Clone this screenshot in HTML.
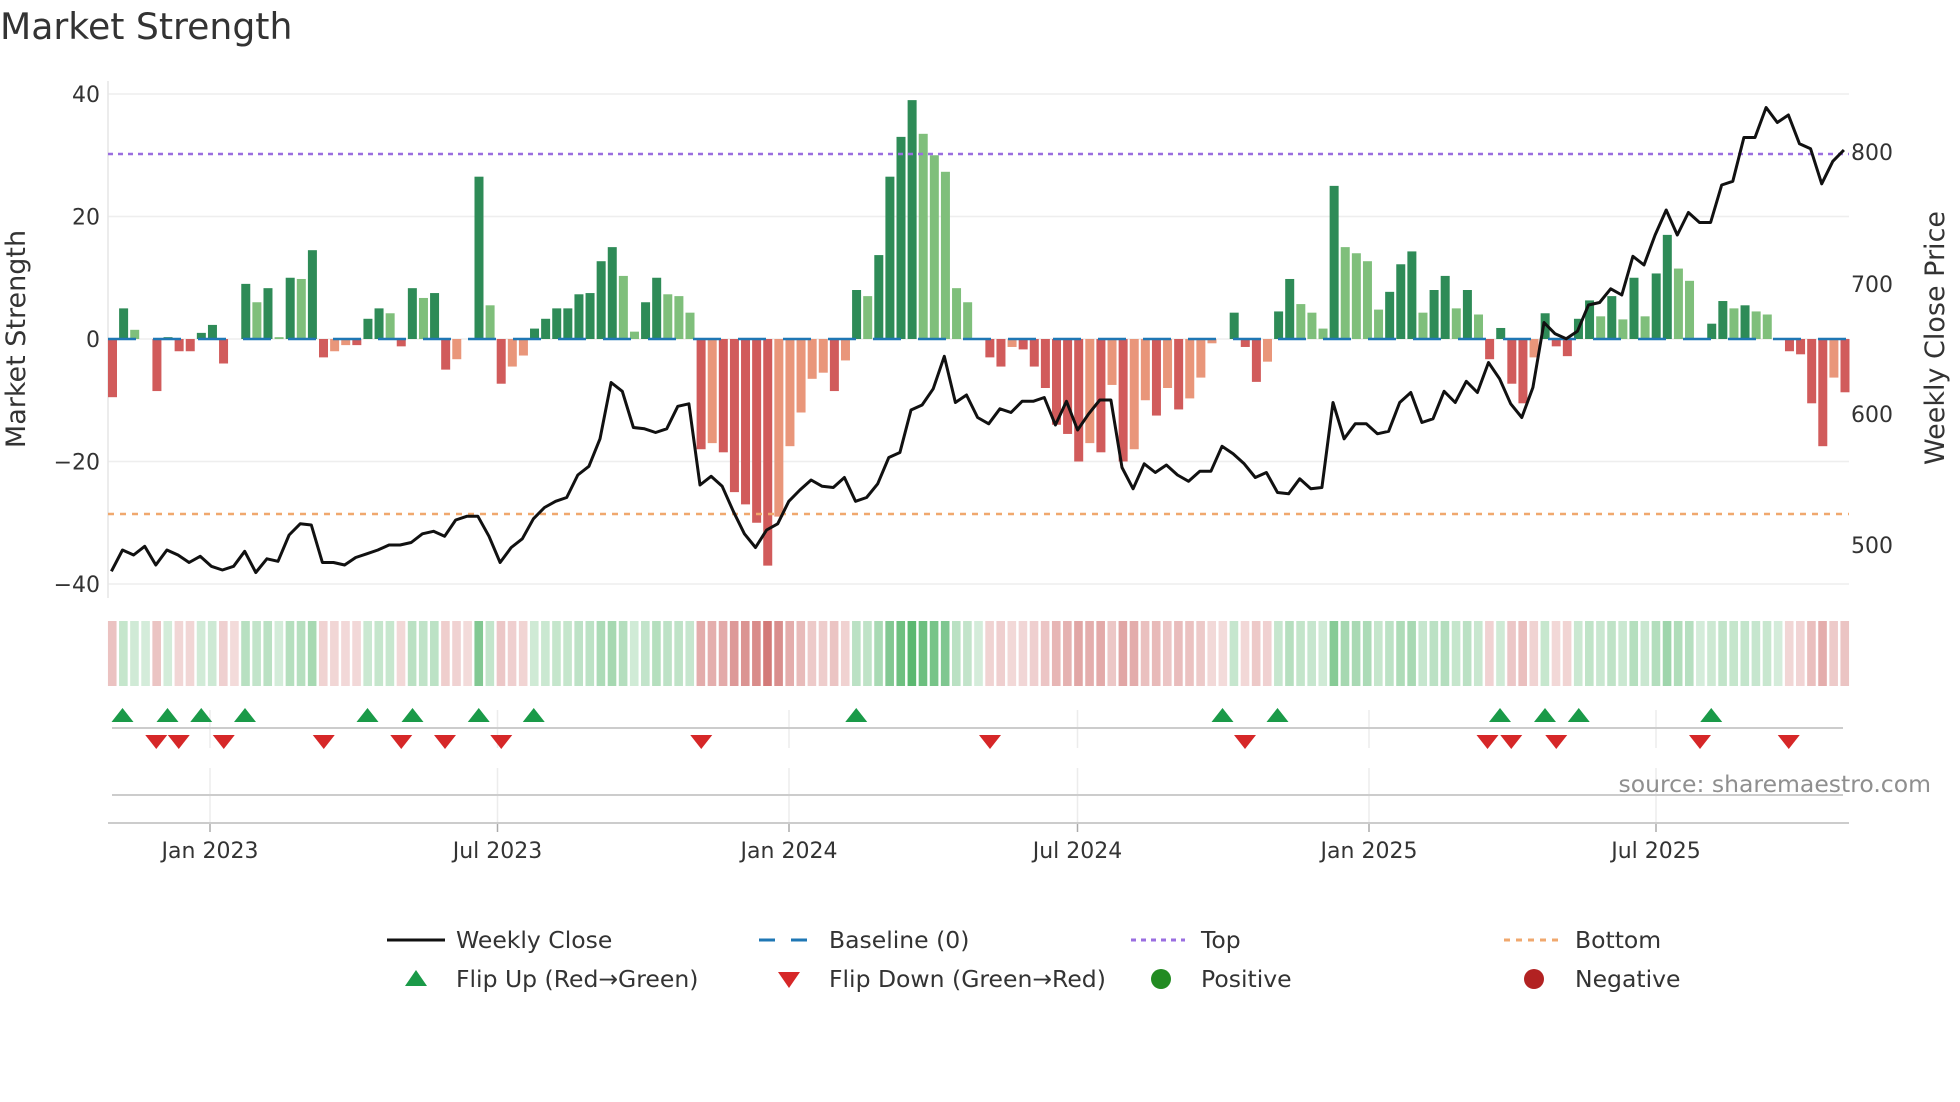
<!DOCTYPE html>
<html><head><meta charset="utf-8"><style>
html,body{margin:0;padding:0;background:#fff;}
svg{display:block;font-family:"DejaVu Sans","Liberation Sans",sans-serif;}
</style></head><body>
<svg id="s" width="1960" height="1102" viewBox="0 0 1960 1102" xmlns="http://www.w3.org/2000/svg">
<text x="0" y="39" font-size="36.2" fill="#333">Market Strength</text>
<g id="grid"></g>
<g id="bars"></g>
<g id="heat"></g>
<g id="lines"></g>
<g id="marks"></g>
<g id="labels" font-size="22" fill="#333"></g>
<text x="1931" y="792" font-size="23.5" fill="#8f8f8f" text-anchor="end">source: sharemaestro.com</text>
<g font-size="23.5" fill="#333">
<line x1="387" y1="940" x2="445" y2="940" stroke="#111" stroke-width="3"/>
<text x="456" y="948">Weekly Close</text>
<line x1="759" y1="940" x2="812" y2="940" stroke="#1f77b4" stroke-width="3" stroke-dasharray="16,16"/>
<text x="829" y="948">Baseline (0)</text>
<line x1="1131" y1="940" x2="1185" y2="940" stroke="#9a6ee0" stroke-width="3" stroke-dasharray="5,5"/>
<text x="1201" y="948">Top</text>
<line x1="1504" y1="940" x2="1560" y2="940" stroke="#f0a86e" stroke-width="3" stroke-dasharray="6,6"/>
<text x="1575" y="948">Bottom</text>
<polygon points="405,986 427,986 416,970" fill="#1a9a48"/>
<text x="456" y="987">Flip Up (Red→Green)</text>
<polygon points="778,972 800,972 789,988" fill="#d62728"/>
<text x="829" y="987">Flip Down (Green→Red)</text>
<circle cx="1161" cy="979" r="10" fill="#228b22"/>
<text x="1201" y="987">Positive</text>
<circle cx="1534" cy="979" r="10" fill="#b22222"/>
<text x="1575" y="987">Negative</text>
</g>
</svg>
<script>
var NS="http://www.w3.org/2000/svg";
function el(p,t,a,txt){var e=document.createElementNS(NS,t);for(var k in a)e.setAttribute(k,a[k]);if(txt!==undefined)e.textContent=txt;document.getElementById(p).appendChild(e);return e;}
var V=[-9.5,5,1.5,0,-8.5,0.3,-2,-2,1,2.3,-4,0,9,6,8.3,0.3,10,9.8,14.5,-3,-2,-1,-1,3.3,5,4.2,-1.2,8.3,6.7,7.5,-5,-3.3,0,26.5,5.5,-7.3,-4.5,-2.7,1.7,3.3,5,5,7.3,7.5,12.7,15,10.3,1.2,6,10,7.3,7,4.3,-18,-17,-18.5,-25,-27,-30,-37,-29,-17.5,-12,-6.5,-5.5,-8.5,-3.5,8,7,13.7,26.5,33,39,33.5,30,27.3,8.3,6,0,-3,-4.5,-1.3,-1.7,-4.5,-8,-14,-15.5,-20,-17,-18.5,-7.5,-20,-18,-10,-12.5,-8,-11.5,-9.7,-6.3,-0.7,0,4.3,-1.3,-7,-3.7,4.5,9.8,5.7,4.3,1.7,25,15,14,12.7,4.8,7.7,12.2,14.3,4.3,8,10.3,5,8,4,-3.3,1.8,-7.3,-10.5,-3,4.2,-1.2,-2.8,3.3,6.3,3.7,7,3.2,10,3.7,10.7,17,11.5,9.5,0,2.5,6.2,5,5.5,4.5,4,0,-2,-2.5,-10.5,-17.5,-6.3,-8.7];
var P=[457,440,444,437,452,440,444,450,445,453,456,453,441,458,447,449,428,419,420,450,450,452,446,443,440,436,436,434,427,425,429,416,413,413,429,450,438,431,415,406,401,398,380,373,351,306,313,342,343,346,343,325,323,388,381,389,409,427,438,424,419,401,392,384,389,390,382,401,398,387,366,362,328,324,311,285,322,316,334,339,327,330,321,321,318,340,321,344,331,320,320,374,391,371,378,372,380,385,377,377,357,363,371,382,378,394,395,383,391,390,322,351,339,339,347,345,322,314,338,335,313,322,305,314,290,303,323,334,310,258,267,271,265,244,242,231,236,205,212,188,168,188,170,178,178,148,145,110,110,86,98,92,115,119,147,129,120];
var X0=112.5,ST=(1845-112.5)/156,Z=339,U=122.5/20;
function X(i){return X0+ST*i;}
function Y(v){return Z-v*U;}
[40,20,0,-20,-40].forEach(function(v){el("grid","line",{x1:108,x2:1849,y1:Y(v),y2:Y(v),stroke:"#eeeeee","stroke-width":1.5});
 el("labels","text",{x:100,y:Y(v)+8,"text-anchor":"end"},(v<0?"\u2212"+(-v):""+v));});
el("grid","line",{x1:108,x2:108,y1:81,y2:598,stroke:"#e6e6e6","stroke-width":1.5});
var dates=[[210,"Jan 2023"],[497.5,"Jul 2023"],[789,"Jan 2024"],[1077.5,"Jul 2024"],[1369,"Jan 2025"],[1656,"Jul 2025"]];
dates.forEach(function(d){
 el("grid","line",{x1:d[0],x2:d[0],y1:710,y2:748,stroke:"#ececec","stroke-width":1.5});
 el("grid","line",{x1:d[0],x2:d[0],y1:768,y2:823,stroke:"#ececec","stroke-width":1.5});
 el("grid","line",{x1:d[0],x2:d[0],y1:823,y2:832,stroke:"#aaa","stroke-width":1.5});
 el("labels","text",{x:d[0],y:858,"text-anchor":"middle"},d[1]);});
el("grid","line",{x1:112,x2:1843,y1:728,y2:728,stroke:"#cccccc","stroke-width":2});
el("grid","line",{x1:112,x2:1843,y1:795,y2:795,stroke:"#cccccc","stroke-width":2});
el("grid","line",{x1:108,x2:1849,y1:823,y2:823,stroke:"#cccccc","stroke-width":2});
var bw=9;
V.forEach(function(v,i){
 if(v===0)return;
 var prev=i>0?V[i-1]:0,c;
 if(v>0)c=(prev>0&&v<prev)?"#7fbf7b":"#2e8b57";
 else c=(prev<0&&v>prev)?"#e9967a":"#d15b5b";
 var y=v>0?Y(v):Z;el("bars","rect",{x:X(i)-bw/2,y:y,width:bw,height:Math.abs(v)*U,fill:c});});
el("lines","line",{x1:108,x2:1849,y1:Z,y2:Z,stroke:"#1f77b4","stroke-width":2.5,"stroke-dasharray":"28,17"});
el("lines","line",{x1:108,x2:1849,y1:154,y2:154,stroke:"#9a6ee0","stroke-width":2.5,"stroke-dasharray":"5,5"});
el("lines","line",{x1:108,x2:1849,y1:514,y2:514,stroke:"#f0a86e","stroke-width":2.5,"stroke-dasharray":"6,6"});
var pts=P.map(function(p,i){return X(i-0.1).toFixed(1)+","+(p*1.25).toFixed(1);}).join(" ");
el("lines","polyline",{points:pts,fill:"none",stroke:"#111","stroke-width":3,"stroke-linejoin":"round"});
var last=1;
V.forEach(function(v,i){
 var s=v>0?1:(v<0?-1:last);last=s;
 var a=0.22+0.62*Math.min(Math.abs(v)/39,1);
 var c=s>0?"rgba(60,170,85,"+a+")":"rgba(200,90,88,"+a+")";
 el("heat","rect",{x:X(i)-ST/2+1,y:621,width:ST-2.5,height:65,fill:c});});
el("labels","text",{x:1851,y:160},"800");el("labels","text",{x:1851,y:292},"700");
el("labels","text",{x:1851,y:422},"600");el("labels","text",{x:1851,y:553},"500");
el("labels","text",{x:0,y:0,transform:"translate(25,339) rotate(-90)","text-anchor":"middle","font-size":"27"},"Market Strength");
el("labels","text",{x:0,y:0,transform:"translate(1944,338) rotate(-90)","text-anchor":"middle","font-size":"27"},"Weekly Close Price");
var ups=[98,134,161,196,294,330,383,427,685,978,1022,1200,1236,1263,1369];
var dns=[125,143,179,259,321,356,401,561,792,996,1190,1209,1245,1360,1431];
ups.forEach(function(x){x*=1.25;el("marks","polygon",{points:(x-11)+",722 "+(x+11)+",722 "+x+",708",fill:"#1a9a48"});});
dns.forEach(function(x){x*=1.25;el("marks","polygon",{points:(x-11)+",735 "+(x+11)+",735 "+x+",749",fill:"#d62728"});});
</script>
</body></html>
